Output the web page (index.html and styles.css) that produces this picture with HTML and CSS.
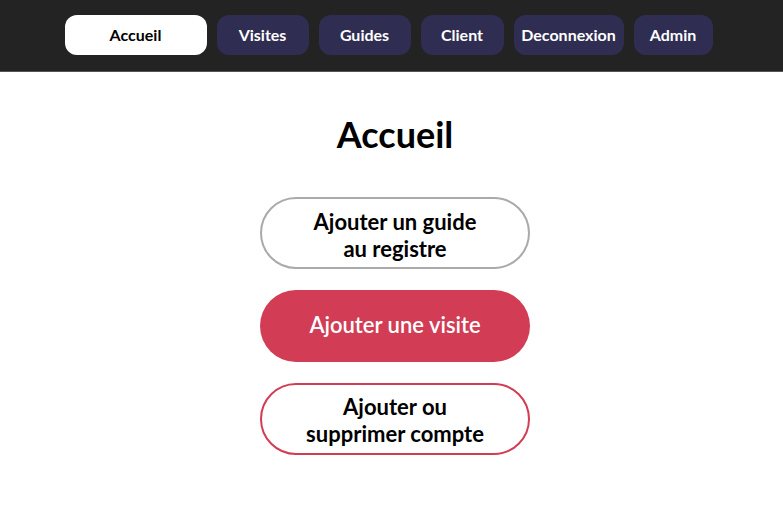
FILE: index.html
```html
<!DOCTYPE html>
<html lang="fr">
<head>
  <meta charset="UTF-8" />
  <title>Accueil</title>
  <link rel="stylesheet" href="styles.css">
</head>
<body>

  <nav class="topbar">
    <a class="nav-btn active" href="#">Accueil</a>
    <a class="nav-btn w92" href="#">Visites</a>
    <a class="nav-btn w92" href="#">Guides</a>
    <a class="nav-btn w83" href="#">Client</a>
    <a class="nav-btn w110" href="#">Deconnexion</a>
    <a class="nav-btn w79" href="#">Admin</a>
  </nav>

  <main class="home">
    <h1>Accueil</h1>
    <div class="actions">
      <a class="action gray" href="#">Ajouter un guide<br>au registre</a>
      <a class="action filled" href="#">Ajouter une visite</a>
      <a class="action outline" href="#">Ajouter ou<br>supprimer compte</a>
    </div>
  </main>

</body>
</html>
```

FILE: styles.css
```css
body {
  margin: 0;
  font-family: Lato, 'Noto Sans', sans-serif;
  background-color: #fff;
}
.topbar {
  height: 72px;
  background-color: #232323;
  border-bottom: 1px solid #555;
  display: flex;
  justify-content: center;
  align-items: center;
  gap: 10px;
  padding-right: 6px;
  padding-bottom: 2px;
  box-sizing: border-box;
}
.nav-btn {
  height: 40px;
  display: flex;
  align-items: center;
  justify-content: center;
  border-radius: 12px;
  background-color: #2f2d52;
  color: #fff;
  font-weight: 700;
  font-size: 16px;
  text-decoration: none;
}
.nav-btn.active {
  background-color: #fff;
  color: #000;
  width: 142px;
}
.w92 { width: 92px; }
.w83 { width: 83px; }
.w110 { width: 110px; }
.w79 { width: 79px; }
.home {
  text-align: center;
  padding-left: 7px;
}
h1 {
  font-size: 36px;
  line-height: 44px;
  font-weight: 700;
  margin: 40px 0 0;
  color: #000;
}
.actions {
  display: flex;
  flex-direction: column;
  align-items: center;
  gap: 21px;
  margin-top: 41px;
}
.action {
  width: 270px;
  height: 72px;
  box-sizing: border-box;
  border-radius: 36px;
  display: flex;
  align-items: center;
  justify-content: center;
  font-size: 22px;
  font-weight: 700;
  line-height: 27px;
  color: #000;
  text-decoration: none;
}
.gray {
  border: 2px solid #aaa;
  padding-top: 3px;
}
.filled {
  background-color: #d23c55;
  color: #fff;
  font-weight: 600;
  padding-bottom: 3px;
}
.outline {
  border: 2px solid #d23c55;
  padding-top: 2px;
}
```
